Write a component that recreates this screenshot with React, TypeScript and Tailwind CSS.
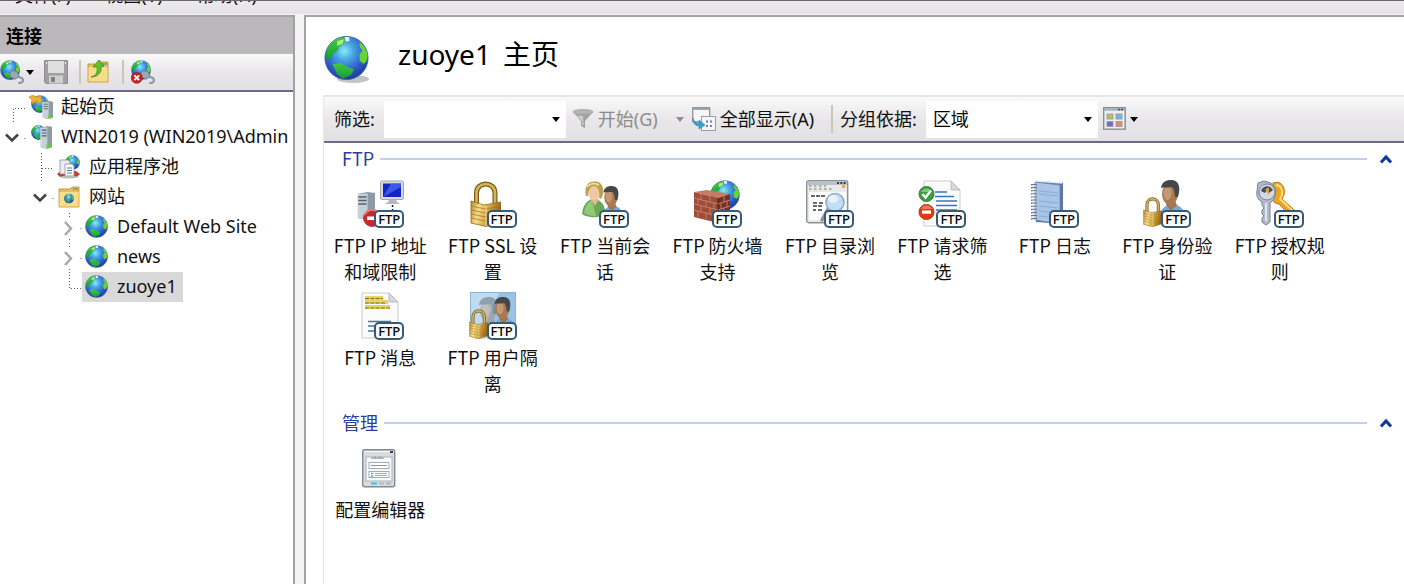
import React, { useState } from "react";

type IconProps = { className?: string };

function GlobeShapes({ id }: { id: string }) {
  return (
    <>
      <defs>
        <radialGradient id={id} cx="0.45" cy="0.34" r="0.68">
          <stop offset="0" stopColor="#8de9f8" />
          <stop offset="0.3" stopColor="#48a8e4" />
          <stop offset="0.68" stopColor="#2f5cc8" />
          <stop offset="1" stopColor="#1c3796" />
        </radialGradient>
        <linearGradient id={id + "g"} x1="0" y1="0" x2="0" y2="1">
          <stop offset="0" stopColor="#46cc3c" />
          <stop offset="1" stopColor="#159a3c" />
        </linearGradient>
      </defs>
      <circle cx="24" cy="24" r="23" fill={`url(#${id})`} stroke="#3f66a8" strokeWidth="1" />
      <path d="M3 26 C0 14 8 4 19 2 L24 4 L20 10 L16 12 L15 16 L10 19 L8 24 Z" fill={`url(#${id}g)`} />
      <path d="M14 6 L21 4 L20 9 L14 11 Z" fill="#d6f3a4" opacity="0.8" />
      <path d="M38 7 Q46 13 46.500 22 Q46 29 42 30 L38 27 L38 20 L41 16 L38 12 Z" fill="#67d432" />
      <path d="M9 31 L17 29 L24 33 L32 36 L29 42 L20 46 L14 41 Z" fill={`url(#${id}g)`} />
      <path d="M22 1.500 L27 1.500 L27 6 L23 6 Z" fill="#dff6ff" />
    </>
  );
}

function Globe({ id, className }: { id: string; className?: string }) {
  return (
    <svg viewBox="0 0 50 50" className={className} aria-hidden="true">
      <GlobeShapes id={id} />
    </svg>
  );
}

function Lock({ x = 0, y = 0, w = 31, h = 46 }: { x?: number; y?: number; w?: number; h?: number }) {
  return (
    <svg x={x} y={y} width={w} height={h} viewBox="0 0 31 46" preserveAspectRatio="none">
      <defs>
        <linearGradient id="brass" x1="0" y1="0" x2="1" y2="0.2">
          <stop offset="0" stopColor="#b98a2c" />
          <stop offset="0.3" stopColor="#f6dc8a" />
          <stop offset="0.6" stopColor="#d9ac48" />
          <stop offset="1" stopColor="#946718" />
        </linearGradient>
      </defs>
      <path d="M6.500 25 V12 C6.500 0 25 0 25 12 V25" fill="none" stroke="#7b5c15" strokeWidth="5" />
      <path d="M6.500 25 V12 C6.500 0 25 0 25 12 V25" fill="none" stroke="#d5b55c" strokeWidth="2.600" />
      <path d="M1 20 L14 24 L31 21 V41 L16 45.500 L1 42 Z" fill="url(#brass)" stroke="#91671a" strokeWidth="0.800" />
      <path d="M1.500 25 L15 28 L30.500 25.500 M1.500 29 L15 32 L30.500 29.500 M1.500 33 L15 36 L30.500 33.500 M1.500 37 L15 40 L30.500 37.500" fill="none" stroke="#9a701f" strokeWidth="0.900" opacity="0.75" />
      <path d="M16 25 V45" stroke="#ffe9a8" strokeWidth="0.800" />
    </svg>
  );
}

function Man({ x = 0, y = 0, faded = false }: { x?: number; y?: number; faded?: boolean }) {
  return (
    <g transform={`translate(${x} ${y})`} opacity={faded ? 0.4 : 1}>
      <path d="M0 42 C1 30 7 25 13 24 C22 24 27 29 29 42 Z" fill="#74a9d8" />
      <path d="M8 25 L13 31 L19 25 L17 21 H9 Z" fill="#a7754c" />
      <ellipse cx="12" cy="14" rx="8" ry="11" fill="#a87a54" />
      <ellipse cx="9.500" cy="13" rx="4" ry="7" fill="#d9af84" opacity="0.6" />
      <path d="M3 8 C4 1 9 0 13 0 C21 0 23 7 20 17 L17 17 C17 12 16 9 14 7 C9 8 6 7 3 8 Z" fill="#47474a" />
    </g>
  );
}

function ServerBox({ x, y, w, h }: { x: number; y: number; w: number; h: number }) {
  return (
    <svg x={x} y={y} width={w} height={h} viewBox="0 0 18 28" preserveAspectRatio="none">
      <path d="M1 2 L11 0 L18 1 V26 L11 28 L1 26 Z" fill="#8e9ba5" />
      <path d="M1 2 L11 1.500 V27.500 L1 26 Z" fill="#c5d0d8" />
      <path d="M2 5 H10 M2 8.500 H10 M2 12 H10" stroke="#53616c" strokeWidth="1.300" />
      <path d="M1.500 2 V26" stroke="#e9f0f4" />
      <circle cx="12" cy="24" r="2.500" fill="#58dc20" />
    </svg>
  );
}

function IpIcon() {
  return (
    <>
      <ServerBox x={0} y={12} w={19} h={28} />
      <rect x="24.500" y="1" width="23" height="18.500" rx="1.500" fill="#d8dadf" stroke="#a3a6ae" />
      <rect x="27" y="3.500" width="18" height="13.500" fill="#1424c2" />
      <path d="M27 17 L35 3.500 H45 V7 Z" fill="#4869f2" opacity="0.75" />
      <path d="M33 19.500 H40 L41 22 L44 24 H29 L32 22 Z" fill="#b5b7bd" />
      <path d="M36.500 25 V31" stroke="#111" strokeWidth="1.400" strokeDasharray="2 2" />
      <circle cx="16" cy="38" r="8.500" fill="#c9282f" stroke="#a3444a" />
      <path d="M8.500 35 A8 8 0 0 1 20 31" stroke="#ee7d7f" strokeWidth="2" fill="none" />
      <rect x="11" y="36.500" width="10" height="3.500" fill="#fff" />
    </>
  );
}

function SessionsIcon() {
  return (
    <>
      <g transform="translate(20 6) scale(0.82)"><Man /></g>
      <path d="M1 34 C2 25 6 20 12 19 C20 19 24 25 25 35 C17 38 6 38 1 34 Z" fill="#67a957" />
      <path d="M3 33 C4 25 8 21 11 21 L15 36 C10 36 6 35 3 33 Z" fill="#8fca79" />
      <path d="M9 19 L14 26 L18 19 Z" fill="#e5b58c" />
      <ellipse cx="13" cy="12" rx="6" ry="8.500" fill="#efc8a3" />
      <path d="M5 16 C3 5 8 1 14 1.500 C22 1 25 12 20 19 L18 18 C19 12 18 8 14 6 C9 6 7 10 7 16 Z" fill="#b6a24d" />
      <path d="M6 7 C9 3 14 3 18 5" stroke="#ebdd94" strokeWidth="2" fill="none" />
    </>
  );
}

function FirewallIcon() {
  return (
    <>
      <svg x="16" y="0" width="30" height="30" viewBox="0 0 48 48"><GlobeShapes id="fw" /></svg>
      <path d="M0 12 L24 18 V43 L0 37 Z" fill="#a04b38" />
      <path d="M24 18 L36 14 V38 L24 43 Z" fill="#793023" />
      <path d="M0 12 L13 10 L36 14 L24 18 Z" fill="#c47c64" />
      <path d="M0 18 L24 24 L36 20 M0 24 L24 30 L36 26 M0 30 L24 36 L36 32" stroke="#c58a74" strokeWidth="0.900" fill="none" />
      <path d="M7 14 V20 M16 16 V22 M4 19 V25 M12 21 V27 M20 23 V29 M7 26 V32 M16 28 V34 M4 31 V37 M12 33 V39 M20 35 V41 M30 16 V22 M27 23 V29 M33 21 V27 M30 28 V34" stroke="#c58a74" strokeWidth="0.800" />
      <path d="M24 18 V43" stroke="#59251b" />
    </>
  );
}

function BrowseIcon() {
  return (
    <>
      <rect x="0.700" y="0.700" width="41" height="42" rx="2" fill="#e9e9e6" stroke="#8d9297" strokeWidth="1.400" />
      <rect x="1.500" y="1.500" width="39.500" height="3.500" fill="#b9c1c8" />
      <path d="M31 3 H40" stroke="#32445a" strokeWidth="1.800" strokeDasharray="2 1.300" />
      <rect x="3" y="12" width="37" height="28" fill="#fff" />
      <path d="M3 6 H20 M3 9 H28" stroke="#9c9c96" strokeWidth="1.500" strokeDasharray="2.500 2.500" />
      <rect x="36" y="5" width="3" height="3" fill="#ddb731" />
      <path d="M5 16 H20 M7 23 H11 M13 23 H17 M7 26 H17 M7 30 H10 M12 30 H17" stroke="#393939" strokeWidth="1.300" strokeDasharray="4 1" />
      <path d="M22 29 L16 40" stroke="#8c9197" strokeWidth="3.500" strokeLinecap="round" />
      <circle cx="29" cy="22.500" r="9" fill="#c1def5" stroke="#90aacb" strokeWidth="1.600" />
      <ellipse cx="27" cy="19" rx="5" ry="4" fill="#fff" opacity="0.6" />
    </>
  );
}

function Sheet() {
  return (
    <>
      <path d="M6 1 H33 L42 10 V46 H6 Z" fill="#fbfbfb" stroke="#c9cbcd" />
      <path d="M33 1 V10 H42 Z" fill="#d5d8da" stroke="#b3b6b8" strokeWidth="0.800" />
    </>
  );
}

function RequestIcon() {
  return (
    <>
      <Sheet />
      <path d="M17 12 H29 M17 16.500 H36 M18 21 H39 M18 25.500 H39 M18 30 H39" stroke="#3676bd" strokeWidth="1.400" />
      <circle cx="8.500" cy="14" r="7.500" fill="#3f9b42" stroke="#397d3a" />
      <path d="M3 12 A6 6 0 0 1 14 12" fill="#8fce8b" opacity="0.8" />
      <path d="M4.500 14 L7.500 17.500 L13 10.500" stroke="#fff" strokeWidth="2.400" fill="none" />
      <circle cx="8.500" cy="32" r="7.500" fill="#df3c16" stroke="#b93617" />
      <path d="M3 29 A6 6 0 0 1 14 29" fill="#f38c68" opacity="0.8" />
      <rect x="4" y="30.500" width="9" height="3.200" fill="#fff" />
    </>
  );
}

function LogIcon() {
  return (
    <>
      <path d="M5 1 L32 3 V44 L5 42 Z" fill="#5e74a9" />
      <path d="M4 2 L29 5 V44 L4 40 Z" fill="#a9c5e6" stroke="#6883b4" strokeWidth="0.800" />
      <path d="M8 11 L27 13 M8 14 L27 16 M8 21 L27 23 M8 26 L27 28 M8 31 L27 33 M8 36 L27 38" stroke="#8aabd3" />
      <path d="M5 1 L31 3" stroke="#e0e9f5" strokeWidth="1.500" />
      <path d="M3 4 V41" stroke="#6a748e" strokeWidth="6" strokeDasharray="1.400 1.700" />
      <path d="M3 5 V41" stroke="#e4ebf6" strokeWidth="4" strokeDasharray="0.700 2.400" />
    </>
  );
}

function KeysIcon() {
  return (
    <>
      <path d="M17 3 C24 0 30 6 28 15 L26 19 L44 35 L39 41 L23 24 C17 23 15 20 16 14 Z" fill="#eaa41d" stroke="#b57818" />
      <path d="M20 5 C25 5 27 10 26 15 L24 19 L37 31" stroke="#ffe081" strokeWidth="2" fill="none" />
      <path d="M1 11 L2 3 L8 1 L15 3 L20 10 L18 19 L14 23 V42 L10 45 L6 42 V38 L8 36 L6 34 V30 L8 28 L6 25 V22 C2 20 0 16 1 11 Z" fill="#b3bacb" stroke="#777f92" />
      <circle cx="11" cy="12" r="8" fill="#d2d8e6" stroke="#7f879b" />
      <path d="M5 11 C7 5 14 5 17 10 L13 13 L12 8 L9 13 Z" fill="#454d61" />
      <path d="M10 9 L12 12 V8" stroke="#e7a12c" strokeWidth="2" fill="none" />
      <path d="M10 23 V41" stroke="#eef1f7" strokeWidth="1.600" />
    </>
  );
}

function MessageIcon() {
  return (
    <>
      <Sheet />
      <path d="M9 6 H27 M9 10 H32 M9 15 H34" stroke="#e5d269" strokeWidth="4" />
      <path d="M9 6.500 H27 M9 11 H29 M9 16 H34" stroke="#80721f" strokeWidth="1.200" strokeDasharray="4 1.300" />
      <path d="M12 29.500 H35 M12 34 H30 M12 39 H24" stroke="#3c77b3" strokeWidth="1.300" />
    </>
  );
}

function IsolationIcon() {
  return (
    <>
      <rect x="1.500" y="0.500" width="45" height="38" fill="#98c2e6" stroke="#8fb3cf" />
      <path d="M2 1 H30 L14 38 H2 Z" fill="#cfe5f5" opacity="0.7" />
      <Man x={7} y={5} faded />
      <g transform="translate(23 5) scale(0.86)"><Man /></g>
      <Lock x={0} y={17} w={19} h={30} />
    </>
  );
}

function ConfigIcon() {
  return (
    <>
      <rect x="6.700" y="5.700" width="32" height="37" rx="2" fill="#d9dcdf" stroke="#84898f" strokeWidth="1.400" />
      <path d="M8 7.500 H38" stroke="#f6f8fa" />
      <path d="M34 8 H37" stroke="#34465e" strokeWidth="2" />
      <rect x="10" y="13" width="26" height="24" fill="#f7f8fa" stroke="#afb4bc" />
      <path d="M15 14 H28 M19 12 V15 M24 12 V15" stroke="#a2a8b0" strokeWidth="1.400" />
      <rect x="13" y="18.500" width="20" height="6" fill="#fff" stroke="#a7abb6" />
      <path d="M15 21.500 H31" stroke="#8c929c" />
      <rect x="13" y="27.500" width="20" height="6" fill="#fff" stroke="#a7abb6" />
      <path d="M19 29.500 H31 M19 31.500 H31" stroke="#a2a8b0" />
      <path d="M15 29.500 H17 M15 32 H17" stroke="#26bfe7" strokeWidth="1.400" />
      <path d="M15 39.500 H21" stroke="#2fc3ed" strokeWidth="2" />
      <path d="M23 39.500 H28 M30 39.500 H35" stroke="#b0b6bd" strokeWidth="2" />
    </>
  );
}

function StartPageIcon({ className }: IconProps) {
  return (
    <svg viewBox="0 0 24 24" className={className} aria-hidden="true">
      <svg x="2" y="0" width="18" height="18" viewBox="0 0 48 48"><GlobeShapes id="sp" /></svg>
      <path d="M0 2 L4 0 L7 2 L12 1 L13 6 L10 9 L8 6 L3 9 L3 5 Z" fill="#efb02b" stroke="#c78318" strokeWidth="0.600" />
      <ServerBox x={13} y={6} w={11} h={18} />
    </svg>
  );
}

function ServerIcon({ className }: IconProps) {
  return (
    <svg viewBox="0 0 24 24" className={className} aria-hidden="true">
      <svg x="2" y="0" width="15" height="15" viewBox="0 0 48 48"><GlobeShapes id="sv" /></svg>
      <ServerBox x={11} y={1} w={12} h={23} />
    </svg>
  );
}

function PoolIcon({ className }: IconProps) {
  return (
    <svg viewBox="0 0 24 24" className={className} aria-hidden="true">
      <svg x="8" y="0" width="15" height="15" viewBox="0 0 48 48"><GlobeShapes id="pl" /></svg>
      <path d="M0 19 L4 16 H19 L23 19 L20 22 H3 Z" fill="#c93a32" />
      <path d="M3 5 H11 L13 7 V19 H3 Z" fill="#ededed" stroke="#8b8f93" strokeWidth="0.800" />
      <path d="M8 9 H15 L17 11 V21 H8 Z" fill="#fff" stroke="#8b8f93" strokeWidth="0.800" />
      <path d="M10 13 H15 M10 15.500 H15 M10 18 H15" stroke="#4673b4" />
      <ellipse cx="12" cy="22" rx="9" ry="1.500" fill="#b9bbbb" />
    </svg>
  );
}

function FolderBase() {
  return (
    <>
      <path d="M2 4 L13 4 L15 2 H22 V22 H2 Z" fill="#e7bd55" stroke="#ba8f35" strokeWidth="0.800" />
      <path d="M2.500 7 H21.500 V21.500 H2.500 Z" fill="#f9dc8b" />
      <path d="M16 4 H21" stroke="#5596d8" strokeWidth="1.400" />
    </>
  );
}

function SitesIcon({ className }: IconProps) {
  return (
    <svg viewBox="0 0 24 24" className={className} aria-hidden="true">
      <FolderBase />
      <svg x="7" y="8.500" width="10" height="10" viewBox="0 0 48 48"><GlobeShapes id="st" /></svg>
    </svg>
  );
}

function ConnectIcon({ id, stopped = false }: { id: string; stopped?: boolean }) {
  return (
    <svg viewBox="0 0 25 25" className="size-6 shrink-0" aria-hidden="true">
      <svg x="0" y="0" width="21" height="21" viewBox="0 0 48 48"><GlobeShapes id={id} /></svg>
      <path d="M10 14 L13 11 L18 12 L20 17 L16 20 L11 18 Z" fill="#9ca8ae" stroke="#667680" strokeWidth="0.800" />
      <path d="M18 17 L23 19 C25 21 24 24 19 24" stroke="#7f9cad" strokeWidth="2.200" fill="none" />
      {stopped && (
        <>
          <circle cx="6" cy="18.500" r="5.800" fill="#c82125" stroke="#91191d" strokeWidth="0.600" />
          <path d="M3.500 16 L8.500 21 M8.500 16 L3.500 21" stroke="#fff" strokeWidth="2" />
        </>
      )}
    </svg>
  );
}

function SaveIcon() {
  return (
    <svg viewBox="0 0 24 24" className="size-6" aria-hidden="true">
      <path d="M0.500 0.500 H23.500 V23.500 H2 L0.500 22 Z" fill="#a0a0a0" stroke="#8d8d8d" />
      <rect x="4" y="1" width="16" height="12" fill="#dedede" />
      <rect x="5" y="15.500" width="14" height="8" fill="#cfcfcf" />
      <rect x="7" y="17" width="4" height="5" fill="#808080" />
      <path d="M2 3 H3 M21 3 H22" stroke="#eee" strokeWidth="2" />
    </svg>
  );
}

function UpFolderIcon() {
  return (
    <svg viewBox="0 0 24 24" className="size-6" aria-hidden="true">
      <FolderBase />
      <path d="M5 17 C10 16 12 12 11 7 L7 7 L13 0 L18 6 L15 7 C16 13 11 17 5 17 Z" fill="#5cc52a" stroke="#348d20" strokeWidth="0.800" />
    </svg>
  );
}

function FunnelIcon() {
  return (
    <svg viewBox="0 0 22 20" className="h-5 w-[22px]" aria-hidden="true">
      <path d="M1 3 L9 12 V17 L13 19 V12 L21 3 Z" fill="#a0a0a0" />
      <ellipse cx="11" cy="3" rx="10" ry="2.500" fill="#b4b4b4" stroke="#a2a2a2" strokeWidth="0.800" />
      <path d="M5 6.500 L10 12 V16 L11.500 16 L11 7 Z" fill="#cfcfcf" />
    </svg>
  );
}

function ShowAllIcon() {
  return (
    <svg viewBox="0 0 24 24" className="size-6" aria-hidden="true">
      <rect x="0.700" y="0.700" width="17" height="14" fill="#f5f6f7" stroke="#969ba1" strokeWidth="1.400" />
      <path d="M1 2 H17.500" stroke="#8e959d" strokeWidth="1.600" />
      <rect x="9.500" y="9.500" width="14" height="14" fill="#f5f5f7" stroke="#9a9fa6" />
      <path d="M14 14.500 H20.500 M14 19 H20.500" stroke="#7778b1" strokeWidth="2" strokeDasharray="2 2" />
      <path d="M1 11 C2 15 4 16 7 16 V13 L13 18 L7 22 V19 C3 19 1 16 1 11 Z" fill="#31a2d6" stroke="#247da9" strokeWidth="0.500" />
    </svg>
  );
}

function ViewIcon() {
  return (
    <svg viewBox="0 0 24 24" className="size-6" aria-hidden="true">
      <rect x="0.700" y="0.700" width="21.500" height="21.500" fill="#eceef0" stroke="#898e94" strokeWidth="1.400" />
      <path d="M1 2.500 H22" stroke="#a3afbd" strokeWidth="2.400" />
      <path d="M15 2.500 H21" stroke="#3b4d68" strokeWidth="1.500" strokeDasharray="2 1" />
      <g stroke="#9a9aa2" strokeWidth="0.900">
        <rect x="4" y="7" width="6" height="5" fill="#bdbd65" />
        <rect x="13" y="7" width="6" height="5" fill="#71b9e4" />
        <rect x="4" y="14.500" width="6" height="5" fill="#7268d0" />
        <rect x="13" y="14.500" width="6" height="5" fill="#e48b6e" />
      </g>
    </svg>
  );
}

function Caret({ className }: IconProps) {
  return (
    <svg viewBox="0 0 8 5" className={`h-[5px] w-2 shrink-0 ${className ?? ""}`} aria-hidden="true">
      <path d="M0 0 H8 L4 5 Z" fill="currentColor" />
    </svg>
  );
}

type Branch = "first" | "open" | "leaf" | "openLeaf" | "closed" | "last";

function BranchMark({ kind }: { kind: Branch }) {
  const dots = { stroke: "#5c5c5c", strokeWidth: 1, strokeDasharray: "1 2", fill: "none" };
  return (
    <svg viewBox="0 0 26 30" className="h-[30px] w-[26px] shrink-0" aria-hidden="true">
      {kind === "first" && <path d="M28 16.500 H13.500 V32" {...dots} />}
      {kind === "leaf" && <path d="M13.500 1 V30 M14 16.500 H28" {...dots} />}
      {kind === "last" && <path d="M13.500 0 V16.500 H28" {...dots} />}
      {(kind === "open" || kind === "openLeaf") && (
        <>
          <path d="M6 12.500 L12 18.500 L18 12.500" stroke="#444" strokeWidth="2.600" fill="none" />
          <path d="M24.500 16.500 H28" {...dots} />
        </>
      )}
      {kind === "closed" && (
        <>
          <path d="M9 10 L15 16.500 L9 23" stroke="#a6a6a6" strokeWidth="2.400" fill="none" />
          <path d="M13.500 1 V5 M13.500 27 V30 M24.500 16.500 H28" {...dots} />
        </>
      )}
    </svg>
  );
}

const tree: { label: string; level: string; branch: Branch; icon: React.ReactNode }[] = [
  { label: "起始页", level: "pl-0", branch: "first", icon: <StartPageIcon className="size-6 shrink-0" /> },
  { label: "WIN2019 (WIN2019\\Admin", level: "pl-0", branch: "open", icon: <ServerIcon className="size-6 shrink-0" /> },
  { label: "应用程序池", level: "pl-7", branch: "leaf", icon: <PoolIcon className="size-6 shrink-0" /> },
  { label: "网站", level: "pl-7", branch: "openLeaf", icon: <SitesIcon className="size-6 shrink-0" /> },
  { label: "Default Web Site", level: "pl-14", branch: "closed", icon: <Globe id="t1" className="size-6 shrink-0" /> },
  { label: "news", level: "pl-14", branch: "closed", icon: <Globe id="t2" className="size-6 shrink-0" /> },
  { label: "zuoye1", level: "pl-14", branch: "last", icon: <Globe id="t3" className="size-6 shrink-0" /> },
];

const ftpFeatures: { label: string; icon: React.ReactNode }[] = [
  { label: "FTP IP 地址和域限制", icon: <IpIcon /> },
  { label: "FTP SSL 设置", icon: <Lock x={1} y={1} w={31} h={46} /> },
  { label: "FTP 当前会话", icon: <SessionsIcon /> },
  { label: "FTP 防火墙支持", icon: <FirewallIcon /> },
  { label: "FTP 目录浏览", icon: <BrowseIcon /> },
  { label: "FTP 请求筛选", icon: <RequestIcon /> },
  { label: "FTP 日志", icon: <LogIcon /> },
  { label: "FTP 身份验证", icon: <><Man x={15} y={0} /><Lock x={0} y={17} w={19} h={30} /></> },
  { label: "FTP 授权规则", icon: <KeysIcon /> },
  { label: "FTP 消息", icon: <MessageIcon /> },
  { label: "FTP 用户隔离", icon: <IsolationIcon /> },
];

function Feature({ label, icon, badge }: { label: string; icon: React.ReactNode; badge?: boolean }) {
  return (
    <li className="flex min-h-28 justify-center">
      <button type="button" className="flex w-[100px] flex-col items-center">
        <span className="relative block size-12 shrink-0">
          <svg viewBox="0 0 48 48" className="size-12" aria-hidden="true">{icon}</svg>
          {badge && (
            <span aria-hidden="true" className="absolute right-0 bottom-0 flex h-[18px] w-[30px] items-center justify-center rounded-[5px] border-2 border-[#365a78] bg-[#fbfcfd] font-['Noto_Sans'] text-[13px] leading-none font-medium text-black">
              FTP
            </span>
          )}
        </span>
        <span className="mt-1 text-center leading-[26px]">{label}</span>
      </button>
    </li>
  );
}

function Group({ title, children }: { title: string; children: React.ReactNode }) {
  const [open, setOpen] = useState(true);
  return (
    <section className="pt-px pb-[3px]">
      <header className="flex h-[30px] items-center pr-3 pl-[18px]">
        <h2 className="pb-[2px] text-[#2f3b9a]">{title}</h2>
        <span className="mr-[13px] ml-[6px] h-[2px] flex-1 bg-[#c2cfee]" />
        <button type="button" aria-label={title} aria-expanded={open} onClick={() => setOpen(!open)}>
          <svg viewBox="0 0 12 10" className="h-[10px] w-3" aria-hidden="true">
            <path d="M1 8.500 L6 3 L11 8.500" stroke="#0b3a9e" strokeWidth="3" fill="none" />
          </svg>
        </button>
      </header>
      {open && <ul className="mt-[6px] grid grid-cols-[repeat(auto-fill,minmax(112px,1fr))] pr-[68px]">{children}</ul>}
    </section>
  );
}

const barFill = "bg-linear-to-b from-[#fafafa] via-[#e9e7e9] to-[#e2e0e2]";

export default function App() {
  const [selected, setSelected] = useState("zuoye1");
  return (
    <div className="flex h-screen flex-col overflow-hidden bg-[#f4f4f4] font-['Noto_Sans','Noto_Sans_CJK_SC',sans-serif] text-[18px] leading-[26px] text-[#111]">
      <nav className="flex h-[14px] shrink-0 items-end gap-[34px] overflow-hidden border-t border-[#6d686d] bg-linear-to-b from-[#edeaed] to-[#e4e2e4] pb-[6px] pl-[15px]">
        <button type="button" className="leading-[26px]">文件(F)</button>
        <button type="button" className="leading-[26px]">视图(V)</button>
        <button type="button" className="leading-[26px]">帮助(H)</button>
      </nav>

      <div className="flex min-h-0 flex-1 pt-px">
        <aside className="flex w-[295px] shrink-0 flex-col border-t-2 border-r-2 border-[#a2a2a2] bg-white">
          <h2 className="flex h-[37px] shrink-0 items-center bg-[#bab8ba] pl-[6px] font-bold text-black">连接</h2>
          <div className={`flex h-[38px] shrink-0 items-center border-b-2 border-[#6b6a8c] ${barFill}`}>
            <button type="button" aria-label="连接" className="flex items-center gap-[2px] text-black">
              <ConnectIcon id="c1" />
              <Caret />
            </button>
            <button type="button" aria-label="保存" disabled className="ml-[10px]"><SaveIcon /></button>
            <span className="ml-[11px] h-6 w-[2px] bg-[#c9c8b8]" />
            <button type="button" aria-label="向上" className="ml-[5px]"><UpFolderIcon /></button>
            <span className="ml-[12px] h-6 w-[2px] bg-[#c9c8b8]" />
            <button type="button" aria-label="断开" className="ml-[7px]"><ConnectIcon id="c2" stopped /></button>
          </div>
          <ul className="overflow-hidden">
            {tree.map((n) => (
              <li key={n.label} className={`flex h-[30px] items-center ${n.level}`}>
                <BranchMark kind={n.branch} />
                <button
                  type="button"
                  onClick={() => setSelected(n.label)}
                  className={`flex h-[30px] items-center gap-2 pr-[6px] pl-[3px] whitespace-nowrap ${selected === n.label ? "bg-[#d9d9d9]" : ""}`}
                >
                  {n.icon}
                  <span className="pb-[2px]">{n.label}</span>
                </button>
              </li>
            ))}
          </ul>
        </aside>

        <main className="ml-[9px] flex min-w-0 flex-1 flex-col border-t-2 border-l-2 border-[#a2a2a2] bg-white pl-[17px]">
          <header className="flex h-[78px] shrink-0 items-start gap-[27px] pt-[18px]">
            <svg viewBox="0 0 48 50" className="h-[50px] w-12" aria-hidden="true">
              <ellipse cx="30" cy="44" rx="16" ry="4" fill="#c4c4c4" />
              <svg x="1" y="0" width="45" height="46" viewBox="0 0 48 48"><GlobeShapes id="hd" /></svg>
            </svg>
            <h1 className="flex gap-3 text-[28px] leading-[38px] text-black">
              <span>zuoye1</span>
              <span>主页</span>
            </h1>
          </header>

          <div className="flex flex-1 flex-col border-t-2 border-l border-[#e6e6e6]">
            <div className={`flex h-[46px] shrink-0 items-center border-b-2 border-[#6b6a8c] pl-[10px] ${barFill}`}>
              <label htmlFor="filter" className="shrink-0">筛选:</label>
              <span className="ml-[9px] flex h-[37px] w-[182px] items-center bg-white pr-[6px] text-black">
                <input id="filter" type="text" className="h-full min-w-0 flex-1 px-[6px] outline-none" />
                <Caret />
              </span>
              <button type="button" disabled className="ml-[6px] flex shrink-0 items-center gap-1 text-[#8c8c8c]">
                <FunnelIcon />
                <span>开始(G)</span>
                <Caret className="ml-[14px]" />
              </button>
              <button type="button" className="ml-2 flex shrink-0 items-center gap-1">
                <ShowAllIcon />
                <span>全部显示(A)</span>
              </button>
              <span className="mr-[7px] ml-[17px] h-7 w-[2px] shrink-0 bg-[#c9c8b8]" />
              <label htmlFor="group" className="shrink-0">分组依据:</label>
              <span className="relative ml-[9px] block h-[37px] w-[172px] shrink-0 text-black">
                <select id="group" className="h-full w-full appearance-none bg-white pl-[7px] outline-none">
                  <option>区域</option>
                </select>
                <Caret className="pointer-events-none absolute top-4 right-[6px]" />
              </span>
              <button type="button" aria-label="视图" className="ml-[5px] flex items-center gap-[3px] text-black">
                <ViewIcon />
                <Caret />
              </button>
            </div>

            <div className="font-['Noto_Sans_CJK_SC',sans-serif]">
              <Group title="FTP">
                {ftpFeatures.map((f) => (
                  <Feature key={f.label} label={f.label} icon={f.icon} badge />
                ))}
              </Group>
              <Group title="管理">
                <Feature label="配置编辑器" icon={<ConfigIcon />} />
              </Group>
            </div>
          </div>
        </main>
      </div>
    </div>
  );
}
